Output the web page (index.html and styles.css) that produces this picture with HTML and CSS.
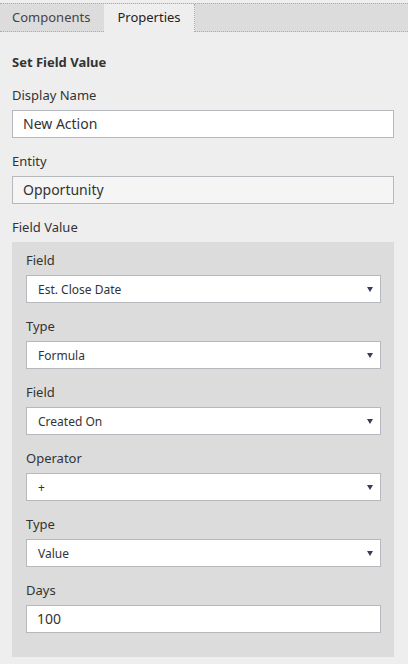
FILE: index.html
```html
<!DOCTYPE html>
<html>
<head>
<meta charset="utf-8">
<link rel="stylesheet" href="styles.css">
</head>
<body>
<div class="tabs">
  <div class="tab first">Components</div>
  <div class="tab active">Properties</div>
</div>
<div class="panel">
  <div class="title">Set Field Value</div>
  <div class="label">Display Name</div>
  <div class="input">New Action</div>
  <div class="label">Entity</div>
  <div class="input disabled">Opportunity</div>
  <div class="label">Field Value</div>
  <div class="group">
    <div class="label">Field</div>
    <div class="select"><span>Est. Close Date</span><span class="arrow"></span></div>
    <div class="label">Type</div>
    <div class="select"><span>Formula</span><span class="arrow"></span></div>
    <div class="label">Field</div>
    <div class="select"><span>Created On</span><span class="arrow"></span></div>
    <div class="label">Operator</div>
    <div class="select"><span>+</span><span class="arrow"></span></div>
    <div class="label">Type</div>
    <div class="select"><span>Value</span><span class="arrow"></span></div>
    <div class="label">Days</div>
    <div class="input last">100</div>
  </div>
</div>
</body>
</html>
```

FILE: styles.css
```css
html, body {
  margin: 0;
  padding: 0;
  background: #eeeeee;
  font-family: "Noto Sans", "Open Sans", sans-serif;
  color: #333;
  font-size: 13px;
}
.tabs {
  margin-top: 3px;
  height: 27px;
  background: #dcdcdc;
  border-top: 1px dotted #aaa;
  border-bottom: 1px dotted #aaa;
  display: flex;
}
.tab {
  line-height: 27px;
  font-size: 13px;
  color: #444;
}
.tab.first {
  width: 92px;
  padding-left: 12px;
}
.tab.active {
  width: 90px;
  text-align: center;
  background: #eeeeee;
  color: #222;
  margin-bottom: -1px;
  height: 28px;
  border-right: 1px dotted #aaa;
}
.panel {
  padding: 17px 14px 0 12px;
}
.title {
  font-weight: bold;
  line-height: 26px;
  margin-bottom: 12px;
}
.label {
  line-height: 17px;
  margin-bottom: 6px;
}
.input {
  height: 26px;
  line-height: 26px;
  background: #fff;
  border: 1px solid #b5b8bd;
  padding: 0 10px;
  font-size: 14px;
  margin-bottom: 15px;
}
.input.disabled {
  background-color: #f5f5f5;
  background-image: radial-gradient(circle, #e6e6e6 0.6px, transparent 0.7px);
  background-size: 6px 6px;
}
.group {
  background: #dcdcdc;
  padding: 10px 13px 24px 14px;
}
.select {
  height: 26px;
  background: #fff;
  border: 1px solid #b5b8bd;
  display: flex;
  align-items: center;
  justify-content: space-between;
  padding: 0 7px 0 11px;
  font-size: 12px;
  margin-bottom: 15px;
}
.arrow {
  width: 0;
  height: 0;
  border-left: 3px solid transparent;
  border-right: 3px solid transparent;
  border-top: 5px solid #3c3c5a;
}
.input.last {
  margin-bottom: 0;
}
```
